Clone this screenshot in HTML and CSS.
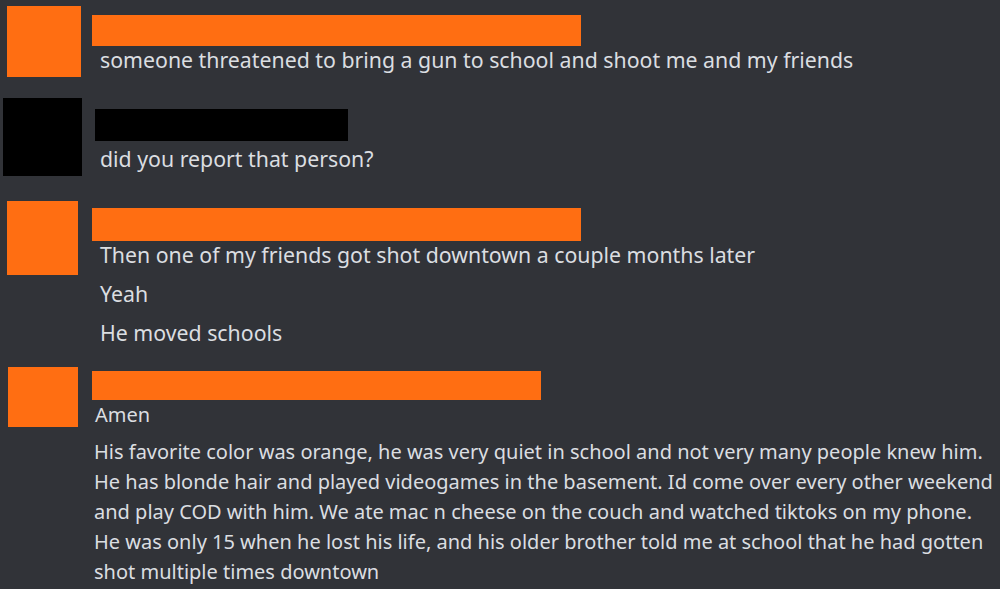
FILE: index.html
```html
<!DOCTYPE html>
<html>
<head>
<meta charset="utf-8">
<link rel="stylesheet" href="styles.css">
</head>
<body>
<div class="chat">
  <div class="msg msg-1">
    <div class="avatar avatar-1"></div>
    <div class="content">
      <div class="name name-1"></div>
      <div class="line line-1">someone threatened to bring a gun to school and shoot me and my friends</div>
    </div>
  </div>
  <div class="msg msg-2">
    <div class="avatar avatar-2"></div>
    <div class="content">
      <div class="name name-2"></div>
      <div class="line line-2">did you report that person?</div>
    </div>
  </div>
  <div class="msg msg-3">
    <div class="avatar avatar-3"></div>
    <div class="content">
      <div class="name name-3"></div>
      <div class="line line-3a">Then one of my friends got shot downtown a couple months later</div>
      <div class="line line-3b">Yeah</div>
      <div class="line line-3b">He moved schools</div>
    </div>
  </div>
  <div class="msg msg-4">
    <div class="avatar avatar-4"></div>
    <div class="content">
      <div class="name name-4"></div>
      <div class="line line-4a">Amen</div>
      <div class="para">His favorite color was orange, he was very quiet in school and not very many people knew him.<br>He has blonde hair and played videogames in the basement. Id come over every other weekend<br>and play COD with him. We ate mac n cheese on the couch and watched tiktoks on my phone.<br>He was only 15 when he lost his life, and his older brother told me at school that he had gotten<br>shot multiple times downtown</div>
    </div>
  </div>
</div>
</body>
</html>
```
FILE: styles.css
```css
html, body {
  margin: 0;
  padding: 0;
  background: #313338;
}
body {
  width: 1000px;
  height: 589px;
  overflow: hidden;
  font-family: "Noto Sans", "Open Sans", sans-serif;
  color: #dbdee1;
}
.chat {
  display: flex;
  flex-direction: column;
}
.msg {
  display: flex;
  align-items: flex-start;
}
.avatar {
  flex: none;
  background: #ff6e12;
}
.name {
  background: #ff6e12;
}
.line {
  font-size: 21.3px;
  line-height: 28px;
  white-space: nowrap;
}

/* message 1 */
.msg-1 { padding: 6px 0 0 7px; height: 98px; box-sizing: border-box; }
.avatar-1 { width: 74px; height: 71px; }
.msg-1 .content { margin-left: 11px; padding-top: 9px; }
.name-1 { width: 489px; height: 31px; }
.line-1 { padding-left: 8px; }

/* message 2 */
.msg-2 { padding: 0 0 0 3px; height: 103px; box-sizing: border-box; }
.avatar-2 { width: 79px; height: 78px; background: #000; }
.msg-2 .content { margin-left: 13px; padding-top: 11px; }
.name-2 { width: 253px; height: 32px; background: #000; }
.line-2 { padding-left: 5px; margin-top: 4px; }

/* message 3 */
.msg-3 { padding: 0 0 0 7px; height: 166px; box-sizing: border-box; }
.avatar-3 { width: 71px; height: 74px; }
.msg-3 .content { margin-left: 14px; padding-top: 7px; }
.name-3 { width: 489px; height: 33px; }
.line-3a, .line-3b { padding-left: 8px; }
.line-3b { margin-top: 11px; }

/* message 4 */
.msg-4 { padding: 0 0 0 8px; }
.avatar-4 { width: 70px; height: 60px; }
.msg-4 .content { margin-left: 14px; padding-top: 4px; }
.name-4 { width: 449px; height: 29px; }
.line-4a { font-size: 20px; padding-left: 3px; margin-top: 1px; }
.para {
  font-size: 20px;
  line-height: 30px;
  padding-left: 2px;
  margin-top: 8px;
  white-space: nowrap;
}
```
